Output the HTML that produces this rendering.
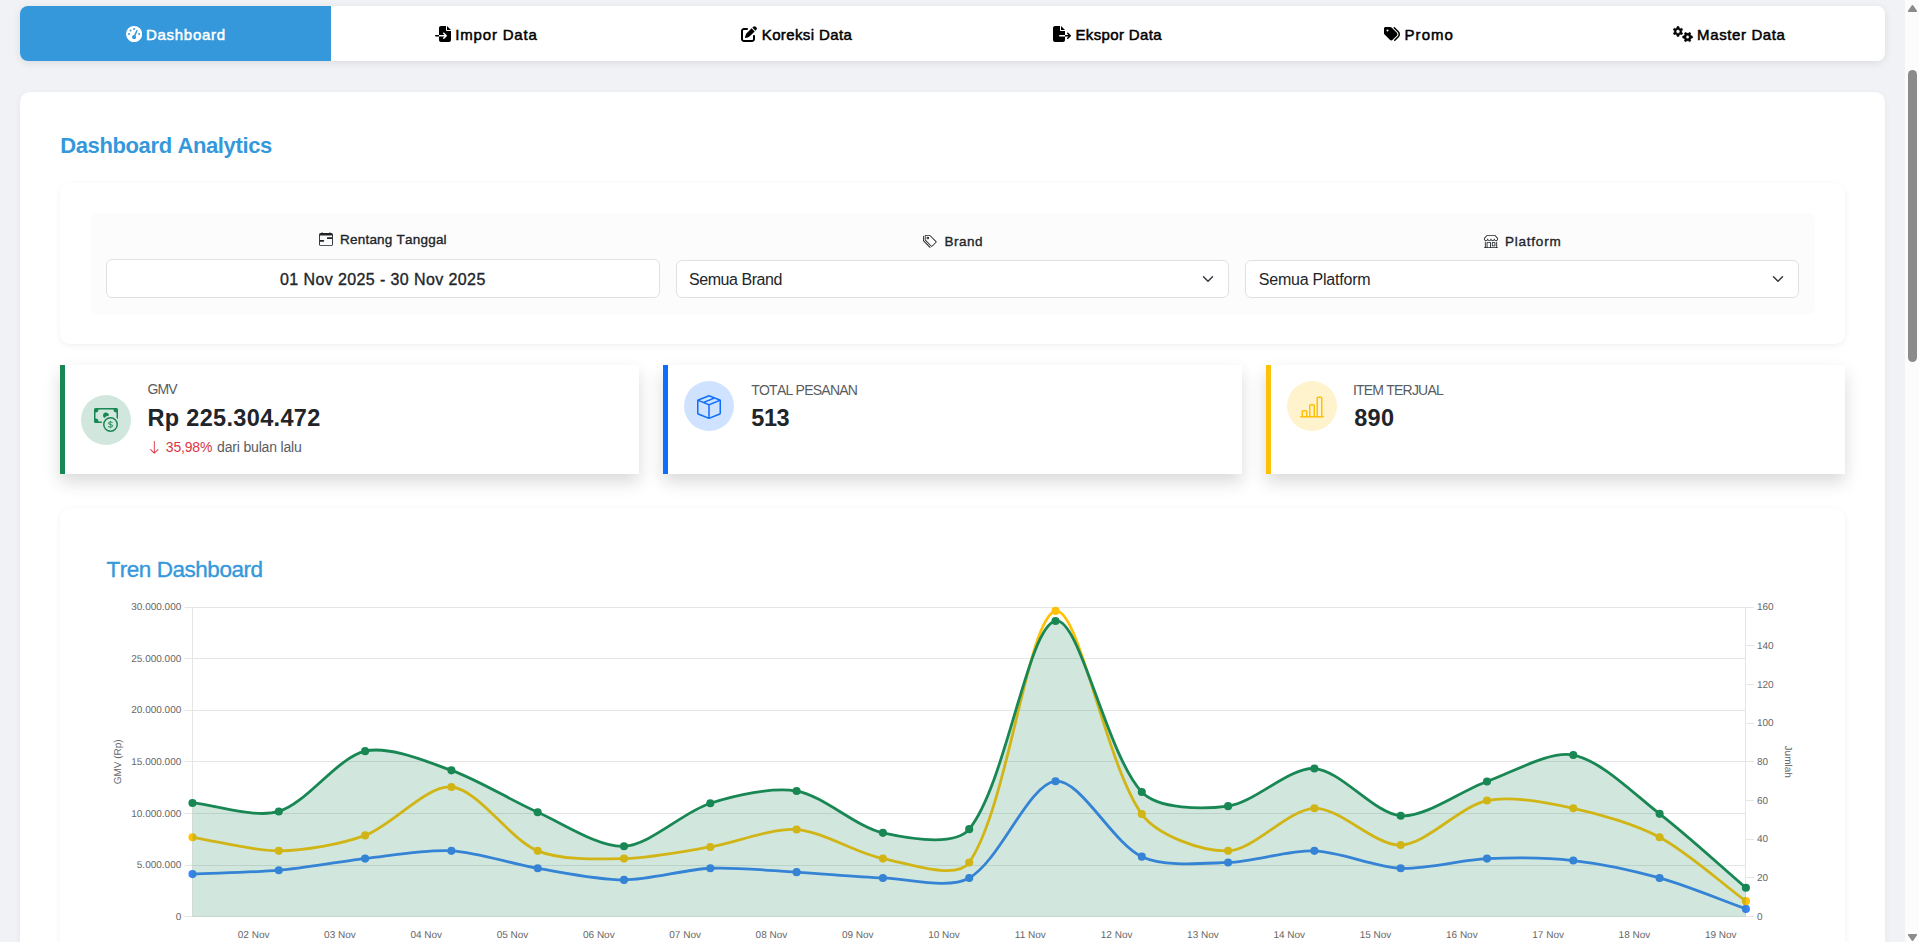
<!DOCTYPE html>
<html lang="id">
<head>
<meta charset="utf-8">
<title>Dashboard Analytics</title>
<style>
html,body{margin:0;padding:0}
body{width:1919px;height:942px;overflow:hidden;position:relative;background:#f0f2f5;font-family:'Liberation Sans', Arial, sans-serif;color:#212529}
nav,main,section,header,aside{display:block;margin:0;padding:0}
.abs,svg{position:absolute}
.t{position:absolute;margin:0;white-space:nowrap;line-height:30px;height:30px;font-kerning:none;text-decoration:none}
.card{position:absolute;background:#fff}
.field{position:absolute;border:1px solid #dee2e6;border-radius:6px;background:#fff;box-sizing:border-box}
.stat{position:absolute;top:365px;width:579px;height:108.7px;background:#fff;box-shadow:0 8px 16px rgba(0,0,0,.15)}
.bar{position:absolute;top:365px;width:5px;height:108.7px}
.circle{position:absolute;width:50px;height:50px;border-radius:50%}
</style>
</head>
<body>
<nav class="tabs">
<div class="card" style="left:20px;top:5.6px;width:1865px;height:55.1px;border-radius:8px;box-shadow:0 2px 8px rgba(0,0,0,.09)"></div>
<div class="abs active" style="left:20px;top:5.6px;width:310.9px;height:55.1px;border-radius:8px 0 0 8px;background:#3498db"></div>
<svg style="left:125.6px;top:25.9px" width="16.2" height="16.2" viewBox="0 0 512 512"><path fill="#fff" d="M0 256a256 256 0 1 1 512 0A256 256 0 1 1 0 256zM288 96a32 32 0 1 0 -64 0 32 32 0 1 0 64 0zM256 416c35.3 0 64-28.7 64-64c0-17.4-6.900-33.100-18.100-44.600L366 161.700c5.300-12.100-.200-26.300-12.300-31.600s-26.300 .200-31.600 12.300L257.900 288c-.600 0-1.300 0-1.900 0c-35.300 0-64 28.700-64 64s28.700 64 64 64zM176 144a32 32 0 1 0 -64 0 32 32 0 1 0 64 0zM96 288a32 32 0 1 0 0-64 32 32 0 1 0 0 64zm352-32a32 32 0 1 0 -64 0 32 32 0 1 0 64 0z"/></svg>
<a class="t" id="nav1" style="left:145.90px;top:19.50px;font-size:15px;font-weight:400;color:#fff;letter-spacing:0.726px;-webkit-text-stroke:0.5px #fff;">Dashboard</a>
<svg style="left:435px;top:25.9px" width="16" height="16" viewBox="0 0 512 512"><path fill="#000" d="M128 64c0-35.300 28.700-64 64-64H352V128c0 17.700 14.300 32 32 32H512V448c0 35.300-28.700 64-64 64H192c-35.300 0-64-28.700-64-64V336H302.100l-39 39c-9.400 9.400-9.400 24.600 0 33.900s24.600 9.400 33.900 0l80-80c9.400-9.400 9.400-24.600 0-33.900l-80-80c-9.400-9.400-24.600-9.400-33.900 0s-9.400 24.600 0 33.900l39 39H128V64zm0 224v48H24c-13.300 0-24-10.700-24-24s10.700-24 24-24H128zM512 128H384V0L512 128z"/></svg>
<a class="t" id="nav2" style="left:455.25px;top:19.50px;font-size:15px;font-weight:400;color:#000;letter-spacing:0.822px;-webkit-text-stroke:0.5px #000;">Impor Data</a>
<svg style="left:741px;top:25.9px" width="16" height="16" viewBox="0 0 512 512"><path fill="#000" d="M471.600 21.700c-21.900-21.900-57.300-21.900-79.200 0L362.300 51.700l97.900 97.900 30.100-30.100c21.900-21.900 21.900-57.300 0-79.200L471.600 21.700zm-299.200 220c-6.100 6.100-10.800 13.600-13.500 21.900l-29.600 88.800c-2.900 8.600-.600 18.100 5.800 24.600s15.900 8.700 24.600 5.800l88.800-29.600c8.200-2.700 15.700-7.400 21.900-13.500L437.700 172.300 339.700 74.300 172.400 241.700zM96 64C43 64 0 107 0 160V416c0 53 43 96 96 96H352c53 0 96-43 96-96V320c0-17.700-14.300-32-32-32s-32 14.300-32 32v96c0 17.700-14.300 32-32 32H96c-17.700 0-32-14.300-32-32V160c0-17.700 14.300-32 32-32h96c17.700 0 32-14.300 32-32s-14.300-32-32-32H96z"/></svg>
<a class="t" id="nav3" style="left:761.75px;top:19.50px;font-size:15px;font-weight:400;color:#000;letter-spacing:0.384px;-webkit-text-stroke:0.5px #000;">Koreksi Data</a>
<svg style="left:1053.2px;top:25.9px" width="18" height="16" viewBox="0 0 576 512"><path fill="#000" d="M0 64C0 28.700 28.700 0 64 0H224V128c0 17.700 14.300 32 32 32H384V288H216c-13.300 0-24 10.700-24 24s10.700 24 24 24H384V448c0 35.300-28.700 64-64 64H64c-35.300 0-64-28.700-64-64V64zM384 336V288H494.100l-39-39c-9.400-9.400-9.400-24.600 0-33.900s24.600-9.400 33.900 0l80 80c9.400 9.400 9.400 24.600 0 33.900l-80 80c-9.400 9.400-24.600 9.400-33.900 0s-9.400-24.600 0-33.900l39-39H384zm0-208H256V0L384 128z"/></svg>
<a class="t" id="nav4" style="left:1075.50px;top:19.50px;font-size:15px;font-weight:400;color:#000;letter-spacing:0.356px;-webkit-text-stroke:0.5px #000;">Ekspor Data</a>
<svg style="left:1384px;top:25.9px" width="16" height="16" viewBox="0 0 512 512"><path fill="#000" d="M345 39.100L472.800 168.400c52.400 53 52.400 138.200 0 191.200L360.800 472.900c-9.300 9.400-24.500 9.500-33.900 .200s-9.500-24.500-.200-33.900L438.600 325.900c33.900-34.300 33.900-89.400 0-123.700L310.900 72.900c-9.300-9.400-9.200-24.600 .200-33.900s24.600-9.200 33.900 .200zM0 229.500V80C0 53.500 21.500 32 48 32H197.500c17 0 33.300 6.700 45.300 18.700l168 168c25 25 25 65.500 0 90.500L277.300 442.700c-25 25-65.500 25-90.500 0l-168-168C6.700 262.700 0 246.500 0 229.500zM144 144a32 32 0 1 0 -64 0 32 32 0 1 0 64 0z"/></svg>
<a class="t" id="nav5" style="left:1404.60px;top:19.50px;font-size:15px;font-weight:400;color:#000;letter-spacing:1.016px;-webkit-text-stroke:0.5px #000;">Promo</a>
<svg style="left:1672.7px;top:25.6px" width="21" height="17.5" viewBox="0 0 21 17.5"><path fill="#000" fill-rule="evenodd" stroke="#000" stroke-width="0.5" stroke-linejoin="round" d="M6.20 9.00L5.90 10.42L4.10 10.42L3.80 9.00L2.52 8.26L1.14 8.71L0.25 7.16L1.32 6.19L1.32 4.71L0.25 3.74L1.14 2.19L2.52 2.64L3.80 1.90L4.10 0.48L5.90 0.48L6.20 1.90L7.48 2.64L8.86 2.19L9.75 3.74L8.68 4.71L8.68 6.19L9.75 7.16L8.86 8.71L7.48 8.26ZM3.05 5.45a1.95 1.95 0 1 0 3.90 0a1.95 1.95 0 1 0 -3.90 0ZM18.15 9.85L19.57 10.15L19.57 11.95L18.15 12.25L17.41 13.53L17.86 14.91L16.31 15.80L15.34 14.73L13.86 14.73L12.89 15.80L11.34 14.91L11.79 13.53L11.05 12.25L9.63 11.95L9.63 10.15L11.05 9.85L11.79 8.57L11.34 7.19L12.89 6.30L13.86 7.37L15.34 7.37L16.31 6.30L17.86 7.19L17.41 8.57ZM12.90 11.05a1.70 1.70 0 1 0 3.40 0a1.70 1.70 0 1 0 -3.40 0Z"/></svg>
<a class="t" id="nav6" style="left:1697.10px;top:19.50px;font-size:15px;font-weight:400;color:#000;letter-spacing:0.615px;-webkit-text-stroke:0.5px #000;">Master Data</a>
</nav>
<main>
<div class="card" style="left:20px;top:92px;width:1865px;height:900px;border-radius:10px;box-shadow:0 2px 7px rgba(0,0,0,.05)"></div>
<h1 class="t" id="title" style="left:60.20px;top:131.10px;font-size:22px;font-weight:700;color:#3498db;letter-spacing:-0.378px;">Dashboard Analytics</h1>
<section class="filters">
<div class="card" style="left:60px;top:183px;width:1785px;height:161px;border-radius:10px;box-shadow:0 2px 6px rgba(0,0,0,.06)"></div>
<div class="abs" style="left:90px;top:213px;width:1725px;height:100.5px;border-radius:6px;background:#fcfcfc"></div>
<svg style="left:318.8px;top:232.1px" width="14" height="14" viewBox="0 0 16 16" fill="#212529"><path fill-rule="evenodd" d="M9 7a1 1 0 0 1 1-1h5v2h-5a1 1 0 0 1-1-1M1 9h4a1 1 0 0 1 0 2H1z"/><path fill-rule="evenodd" d="M3.5 0a.5.5 0 0 1 .5.5V1h8V.5a.5.5 0 0 1 1 0V1h1a2 2 0 0 1 2 2v11a2 2 0 0 1-2 2H2a2 2 0 0 1-2-2V3a2 2 0 0 1 2-2h1V.5a.5.5 0 0 1 .5-.5M1 4v10a1 1 0 0 0 1 1h12a1 1 0 0 0 1-1V4z"/></svg>
<label class="t" id="lab1" style="left:340.00px;top:225.30px;font-size:13.5px;font-weight:400;color:#212529;letter-spacing:0.216px;-webkit-text-stroke:0.35px #212529;">Rentang Tanggal</label>
<div class="field" style="left:106px;top:259px;width:553.7px;height:38.5px"></div>
<div class="t" id="inp1" style="left:280.00px;top:264.90px;font-size:16px;font-weight:400;color:#212529;letter-spacing:0.400px;-webkit-text-stroke:0.35px #212529;">01 Nov 2025 - 30 Nov 2025</div>
<svg style="left:922.6px;top:234.2px" width="14" height="14" viewBox="0 0 16 16" fill="#212529"><path fill-rule="evenodd" d="M3 2v4.586l7 7L14.586 9l-7-7zM2 2a1 1 0 0 1 1-1h4.586a1 1 0 0 1 .707.293l7 7a1 1 0 0 1 0 1.414l-4.586 4.586a1 1 0 0 1-1.414 0l-7-7A1 1 0 0 1 2 6.586z"/><path fill-rule="evenodd" d="M5.5 5a.5.5 0 1 1 0-1 .5.5 0 0 1 0 1m0 1a1.5 1.5 0 1 0 0-3 1.5 1.5 0 0 0 0 3M1 7.086a1 1 0 0 0 .293.707L8.750 15.250l-.043.043a1 1 0 0 1-1.414 0l-7-7A1 1 0 0 1 0 7.586V3a1 1 0 0 1 1-1z"/></svg>
<label class="t" id="lab2" style="left:944.60px;top:226.50px;font-size:13.5px;font-weight:400;color:#212529;letter-spacing:0.446px;-webkit-text-stroke:0.35px #212529;">Brand</label>
<div class="field" style="left:675.7px;top:260px;width:553.2px;height:38px"></div>
<div class="t" id="sel2" style="left:689.00px;top:264.70px;font-size:16px;font-weight:400;color:#212529;letter-spacing:-0.444px;">Semua Brand</div>
<svg style="left:1483.6px;top:234.4px" width="14" height="14" viewBox="0 0 16 16" fill="#212529"><path fill-rule="evenodd" d="M2.970 1.350A1 1 0 0 1 3.730 1h8.540a1 1 0 0 1 .760.350l2.609 3.044A1.500 1.500 0 0 1 16 5.370v.255a2.375 2.375 0 0 1-4.250 1.458A2.370 2.370 0 0 1 9.875 8 2.370 2.370 0 0 1 8 7.083 2.370 2.370 0 0 1 6.125 8a2.370 2.370 0 0 1-1.875-.917A2.375 2.375 0 0 1 0 5.625V5.370a1.500 1.500 0 0 1 .361-.976zm1.780 4.275a1.375 1.375 0 0 0 2.750 0 .500.500 0 0 1 1 0 1.375 1.375 0 0 0 2.750 0 .500.500 0 0 1 1 0 1.375 1.375 0 1 0 2.750 0V5.370a.500.500 0 0 0-.120-.325L12.270 2H3.730L1.120 5.045A.500.500 0 0 0 1 5.370v.255a1.375 1.375 0 0 0 2.750 0 .500.500 0 0 1 1 0M1.500 8.500A.500.500 0 0 1 2 9v6h1v-5a1 1 0 0 1 1-1h3a1 1 0 0 1 1 1v5h6V9a.500.500 0 0 1 1 0v6h.500a.500.500 0 0 1 0 1H.500a.500.500 0 0 1 0-1H1V9a.500.500 0 0 1 .500-.500M4 15h3v-5H4zm5-5a1 1 0 0 1 1-1h2a1 1 0 0 1 1 1v3a1 1 0 0 1-1 1h-2a1 1 0 0 1-1-1zm3 0h-2v3h2z"/></svg>
<label class="t" id="lab3" style="left:1505.00px;top:226.50px;font-size:13.5px;font-weight:400;color:#212529;letter-spacing:0.769px;-webkit-text-stroke:0.35px #212529;">Platform</label>
<div class="field" style="left:1245px;top:260px;width:553.7px;height:38px"></div>
<div class="t" id="sel3" style="left:1258.75px;top:264.70px;font-size:16px;font-weight:400;color:#212529;letter-spacing:-0.222px;">Semua Platform</div>
<svg style="left:1200.2px;top:273px" width="16" height="12" viewBox="0 0 16 16"><path fill="none" stroke="#343a40" stroke-linecap="round" stroke-linejoin="round" stroke-width="2" d="m2 5 6 6 6-6"/></svg>
<svg style="left:1770.2px;top:273px" width="16" height="12" viewBox="0 0 16 16"><path fill="none" stroke="#343a40" stroke-linecap="round" stroke-linejoin="round" stroke-width="2" d="m2 5 6 6 6-6"/></svg>
</section>
<section class="stats">
<div class="stat" style="left:60px"></div>
<div class="stat" style="left:663px"></div>
<div class="stat" style="left:1266px"></div>
<div class="bar" style="left:60px;background:#198754"></div>
<div class="bar" style="left:663px;background:#0d6efd"></div>
<div class="bar" style="left:1266px;background:#ffc107"></div>
<div class="circle" style="left:81px;top:395px;background:#d1e7dd"></div>
<svg style="left:94px;top:408px" width="24" height="24" viewBox="0 0 16 16" fill="#198754"><path fill-rule="evenodd" d="M11 15a4 4 0 1 0 0-8 4 4 0 0 0 0 8m5-4a5 5 0 1 1-10 0 5 5 0 0 1 10 0"/><path fill-rule="evenodd" d="M9.438 11.944c.047.596.518 1.060 1.363 1.116v.440h.375v-.443c.875-.061 1.386-.529 1.386-1.207 0-.618-.390-.936-1.090-1.100l-.296-.070v-1.200c.376.043.614.248.671.532h.658c-.047-.575-.540-1.024-1.329-1.073V8.500h-.375v.450c-.747.073-1.255.522-1.255 1.158 0 .562.378.920 1.007 1.066l.248.061v1.272c-.384-.058-.639-.270-.696-.563h-.668zm1.360-1.354c-.369-.085-.569-.260-.569-.522 0-.294.216-.514.572-.578v1.100zm.432.746c.449.104.655.272.655.569 0 .339-.257.571-.709.614v-1.195z"/><path fill-rule="evenodd" d="M1 0a1 1 0 0 0-1 1v8a1 1 0 0 0 1 1h4.083q.088-.517.258-1H3a2 2 0 0 0-2-2V3a2 2 0 0 0 2-2h10a2 2 0 0 0 2 2v3.528c.380.340.717.728 1 1.154V1a1 1 0 0 0-1-1z"/><path fill-rule="evenodd" d="M9.998 5.083 10 5a2 2 0 1 0-3.132 1.650 6 6 0 0 1 3.130-1.567"/></svg>
<div class="t" id="s1l" style="left:147.50px;top:374.00px;font-size:14px;font-weight:400;color:#595c5f;letter-spacing:-0.876px;">GMV</div>
<div class="t" id="s1v" style="left:147.50px;top:403.00px;font-size:23.5px;font-weight:700;color:#212529;letter-spacing:0.325px;">Rp 225.304.472</div>
<svg style="left:146.6px;top:440px" width="14.6" height="14.6" viewBox="0 0 16 16" fill="#dc3545"><path fill-rule="evenodd" d="M8 1a.5.5 0 0 1 .5.5v11.793l3.146-3.147a.5.5 0 0 1 .708.708l-4 4a.5.5 0 0 1-.708 0l-4-4a.5.5 0 0 1 .708-.708L7.500 13.293V1.500A.5.5 0 0 1 8 1"/></svg>
<span class="t" id="s1p" style="left:165.80px;top:432.00px;font-size:14px;font-weight:400;color:#dc3545;letter-spacing:-0.187px;">35,98%</span>
<span class="t" id="s1d" style="left:217.10px;top:432.00px;font-size:14px;font-weight:400;color:#595c5f;letter-spacing:-0.178px;">dari bulan lalu</span>
<div class="circle" style="left:684px;top:381px;background:#cfe2ff"></div>
<svg style="left:697px;top:394.7px" width="24" height="24" viewBox="0 0 16 16" fill="#0d6efd"><path fill-rule="evenodd" d="M8.186 1.113a.5.5 0 0 0-.372 0L1.846 3.500l2.404.961L10.404 2zm3.564 1.426L5.596 5 8 5.961 14.154 3.500zm3.250 1.700-6.500 2.600v7.922l6.500-2.600V4.240zM7.500 14.762V6.838L1 4.239v7.923zM7.443.184a1.500 1.500 0 0 1 1.114 0l7.129 2.852A.500.500 0 0 1 16 3.500v8.662a1 1 0 0 1-.629.928l-7.185 2.874a.500.500 0 0 1-.372 0L.630 13.090a1 1 0 0 1-.630-.928V3.500a.500.500 0 0 1 .314-.464z"/></svg>
<div class="t" id="s2l" style="left:751.20px;top:375.00px;font-size:14px;font-weight:400;color:#595c5f;letter-spacing:-0.767px;">TOTAL PESANAN</div>
<div class="t" id="s2v" style="left:751.20px;top:403.00px;font-size:23.5px;font-weight:700;color:#212529;letter-spacing:-0.370px;">513</div>
<div class="circle" style="left:1287px;top:381px;background:#fff3cd"></div>
<svg style="left:1300px;top:394.7px" width="24" height="24" viewBox="0 0 16 16" fill="#ffc107"><path fill-rule="evenodd" d="M11 2a1 1 0 0 1 1-1h2a1 1 0 0 1 1 1v12h.5a.5.5 0 0 1 0 1H.5a.5.5 0 0 1 0-1H1v-3a1 1 0 0 1 1-1h2a1 1 0 0 1 1 1v3h1V7a1 1 0 0 1 1-1h2a1 1 0 0 1 1 1v7h1zm1 12h2V2h-2zm-3 0V7H7v7zm-5 0v-3H2v3z"/></svg>
<div class="t" id="s3l" style="left:1352.90px;top:375.00px;font-size:14px;font-weight:400;color:#595c5f;letter-spacing:-0.789px;">ITEM TERJUAL</div>
<div class="t" id="s3v" style="left:1354.20px;top:403.00px;font-size:23.5px;font-weight:700;color:#212529;letter-spacing:0.330px;">890</div>
</section>
<section class="trend">
<div class="card" style="left:60px;top:508px;width:1785px;height:500px;border-radius:10px;box-shadow:0 2px 6px rgba(0,0,0,.06)"></div>
<h2 class="t" id="ctitle" style="left:106.50px;top:554.70px;font-size:22.5px;font-weight:400;color:#3498db;letter-spacing:-0.467px;-webkit-text-stroke:0.35px #3498db;">Tren Dashboard</h2>
<svg class="chart" width="1919" height="942" viewBox="0 0 1919 942" style="left:0;top:0;font-family:'Liberation Sans',Arial,sans-serif;font-size:10px;text-rendering:geometricPrecision">
<line x1="184.5" y1="607.5" x2="1746" y2="607.5" stroke="#e5e5e5" stroke-width="1"/>
<line x1="184.5" y1="658.5" x2="1746" y2="658.5" stroke="#e5e5e5" stroke-width="1"/>
<line x1="184.5" y1="710.5" x2="1746" y2="710.5" stroke="#e5e5e5" stroke-width="1"/>
<line x1="184.5" y1="761.5" x2="1746" y2="761.5" stroke="#e5e5e5" stroke-width="1"/>
<line x1="184.5" y1="813.5" x2="1746" y2="813.5" stroke="#e5e5e5" stroke-width="1"/>
<line x1="184.5" y1="865.5" x2="1746" y2="865.5" stroke="#e5e5e5" stroke-width="1"/>
<line x1="184.5" y1="916.5" x2="1746" y2="916.5" stroke="#e5e5e5" stroke-width="1"/>
<line x1="192.5" y1="607" x2="192.5" y2="917" stroke="#e5e5e5" stroke-width="1"/>
<line x1="1745.5" y1="607" x2="1745.5" y2="917" stroke="#e5e5e5" stroke-width="1"/>
<line x1="1746" y1="607.5" x2="1754" y2="607.5" stroke="#e5e5e5" stroke-width="1"/>
<line x1="1746" y1="645.5" x2="1754" y2="645.5" stroke="#e5e5e5" stroke-width="1"/>
<line x1="1746" y1="684.5" x2="1754" y2="684.5" stroke="#e5e5e5" stroke-width="1"/>
<line x1="1746" y1="723.5" x2="1754" y2="723.5" stroke="#e5e5e5" stroke-width="1"/>
<line x1="1746" y1="761.5" x2="1754" y2="761.5" stroke="#e5e5e5" stroke-width="1"/>
<line x1="1746" y1="800.5" x2="1754" y2="800.5" stroke="#e5e5e5" stroke-width="1"/>
<line x1="1746" y1="839.5" x2="1754" y2="839.5" stroke="#e5e5e5" stroke-width="1"/>
<line x1="1746" y1="877.5" x2="1754" y2="877.5" stroke="#e5e5e5" stroke-width="1"/>
<line x1="1746" y1="916.5" x2="1754" y2="916.5" stroke="#e5e5e5" stroke-width="1"/>
<path d="M192.50 874.08C218.39 872.92 253.01 872.52 278.80 870.21C304.79 867.88 339.15 861.51 365.10 858.60C390.93 855.70 425.72 849.42 451.40 850.86C477.50 852.32 511.67 863.90 537.70 868.27C563.45 872.60 598.11 879.88 624.00 879.88C649.89 879.88 684.31 869.44 710.30 868.27C736.09 867.12 770.73 870.69 796.60 872.14C822.51 873.60 856.98 877.08 882.90 877.95C908.76 878.82 948.51 889.55 969.20 877.95C1000.29 860.52 1028.02 784.59 1055.50 781.20C1079.80 778.20 1112.29 842.77 1141.80 856.66C1164.07 867.15 1202.30 863.34 1228.10 862.47C1254.08 861.60 1288.65 849.99 1314.40 850.86C1340.43 851.74 1374.63 867.11 1400.70 868.27C1426.41 869.43 1461.03 859.76 1487.00 858.60C1512.81 857.44 1547.67 857.66 1573.30 860.53C1599.45 863.47 1634.24 870.84 1659.60 877.95C1686.02 885.35 1720.01 899.62 1745.90 908.91" fill="none" stroke="#3b82f6" stroke-width="2.8" stroke-linejoin="round" stroke-linecap="butt"/>
<circle cx="192.50" cy="874.08" r="4.05" fill="#3b82f6"/>
<circle cx="278.80" cy="870.21" r="4.05" fill="#3b82f6"/>
<circle cx="365.10" cy="858.60" r="4.05" fill="#3b82f6"/>
<circle cx="451.40" cy="850.86" r="4.05" fill="#3b82f6"/>
<circle cx="537.70" cy="868.27" r="4.05" fill="#3b82f6"/>
<circle cx="624.00" cy="879.88" r="4.05" fill="#3b82f6"/>
<circle cx="710.30" cy="868.27" r="4.05" fill="#3b82f6"/>
<circle cx="796.60" cy="872.14" r="4.05" fill="#3b82f6"/>
<circle cx="882.90" cy="877.95" r="4.05" fill="#3b82f6"/>
<circle cx="969.20" cy="877.95" r="4.05" fill="#3b82f6"/>
<circle cx="1055.50" cy="781.20" r="4.05" fill="#3b82f6"/>
<circle cx="1141.80" cy="856.66" r="4.05" fill="#3b82f6"/>
<circle cx="1228.10" cy="862.47" r="4.05" fill="#3b82f6"/>
<circle cx="1314.40" cy="850.86" r="4.05" fill="#3b82f6"/>
<circle cx="1400.70" cy="868.27" r="4.05" fill="#3b82f6"/>
<circle cx="1487.00" cy="858.60" r="4.05" fill="#3b82f6"/>
<circle cx="1573.30" cy="860.53" r="4.05" fill="#3b82f6"/>
<circle cx="1659.60" cy="877.95" r="4.05" fill="#3b82f6"/>
<circle cx="1745.90" cy="908.91" r="4.05" fill="#3b82f6"/>
<path d="M192.50 837.31C218.39 841.38 252.96 851.15 278.80 850.86C304.74 850.57 340.77 844.38 365.10 835.38C392.55 825.22 426.57 784.78 451.40 787.00C478.35 789.42 509.05 838.97 537.70 850.86C560.83 860.45 598.17 859.18 624.00 858.60C649.95 858.02 684.55 851.32 710.30 846.99C736.33 842.61 771.15 827.86 796.60 829.57C822.93 831.35 856.33 853.54 882.90 858.60C908.11 863.40 956.50 880.69 969.20 862.47C1008.28 806.38 1027.21 618.85 1055.50 610.92C1078.99 607.05 1105.46 763.58 1141.80 814.10C1157.24 835.56 1202.54 851.72 1228.10 850.86C1254.32 849.98 1288.18 809.17 1314.40 808.29C1339.96 807.43 1375.26 846.20 1400.70 845.05C1427.04 843.87 1459.64 806.38 1487.00 800.55C1511.42 795.35 1548.05 802.91 1573.30 808.29C1599.83 813.94 1635.84 824.53 1659.60 837.31C1687.62 852.39 1720.01 882.01 1745.90 901.17" fill="none" stroke="#ffc107" stroke-width="2.8" stroke-linejoin="round" stroke-linecap="butt"/>
<circle cx="192.50" cy="837.31" r="4.05" fill="#ffc107"/>
<circle cx="278.80" cy="850.86" r="4.05" fill="#ffc107"/>
<circle cx="365.10" cy="835.38" r="4.05" fill="#ffc107"/>
<circle cx="451.40" cy="787.00" r="4.05" fill="#ffc107"/>
<circle cx="537.70" cy="850.86" r="4.05" fill="#ffc107"/>
<circle cx="624.00" cy="858.60" r="4.05" fill="#ffc107"/>
<circle cx="710.30" cy="846.99" r="4.05" fill="#ffc107"/>
<circle cx="796.60" cy="829.57" r="4.05" fill="#ffc107"/>
<circle cx="882.90" cy="858.60" r="4.05" fill="#ffc107"/>
<circle cx="969.20" cy="862.47" r="4.05" fill="#ffc107"/>
<circle cx="1055.50" cy="610.92" r="4.05" fill="#ffc107"/>
<circle cx="1141.80" cy="814.10" r="4.05" fill="#ffc107"/>
<circle cx="1228.10" cy="850.86" r="4.05" fill="#ffc107"/>
<circle cx="1314.40" cy="808.29" r="4.05" fill="#ffc107"/>
<circle cx="1400.70" cy="845.05" r="4.05" fill="#ffc107"/>
<circle cx="1487.00" cy="800.55" r="4.05" fill="#ffc107"/>
<circle cx="1573.30" cy="808.29" r="4.05" fill="#ffc107"/>
<circle cx="1659.60" cy="837.31" r="4.05" fill="#ffc107"/>
<circle cx="1745.90" cy="901.17" r="4.05" fill="#ffc107"/>
<path d="M192.50 802.95C218.39 805.50 255.41 818.47 278.80 811.45C307.19 802.93 336.96 757.85 365.10 751.15C388.74 745.52 426.57 761.56 451.40 770.35C478.35 779.89 511.37 800.67 537.70 812.25C563.15 823.44 598.61 847.57 624.00 846.25C650.39 844.87 683.10 811.95 710.30 803.25C734.88 795.39 771.95 786.82 796.60 791.05C823.73 795.70 855.66 826.84 882.90 832.85C907.44 838.27 954.85 846.76 969.20 829.15C1006.63 783.19 1027.51 626.97 1055.50 620.95C1079.29 615.84 1106.24 753.90 1141.80 792.05C1158.02 809.46 1203.16 809.55 1228.10 806.15C1254.94 802.50 1289.08 767.14 1314.40 768.55C1340.86 770.02 1374.07 813.76 1400.70 815.75C1425.85 817.63 1460.74 790.69 1487.00 781.45C1512.52 772.48 1549.30 750.54 1573.30 755.05C1601.08 760.26 1634.80 794.78 1659.60 813.85C1686.58 834.59 1720.01 865.58 1745.90 887.75L1745.90 916.65L192.50 916.65Z" fill="rgba(25,135,84,0.2)" stroke="none"/>
<path d="M192.50 802.95C218.39 805.50 255.41 818.47 278.80 811.45C307.19 802.93 336.96 757.85 365.10 751.15C388.74 745.52 426.57 761.56 451.40 770.35C478.35 779.89 511.37 800.67 537.70 812.25C563.15 823.44 598.61 847.57 624.00 846.25C650.39 844.87 683.10 811.95 710.30 803.25C734.88 795.39 771.95 786.82 796.60 791.05C823.73 795.70 855.66 826.84 882.90 832.85C907.44 838.27 954.85 846.76 969.20 829.15C1006.63 783.19 1027.51 626.97 1055.50 620.95C1079.29 615.84 1106.24 753.90 1141.80 792.05C1158.02 809.46 1203.16 809.55 1228.10 806.15C1254.94 802.50 1289.08 767.14 1314.40 768.55C1340.86 770.02 1374.07 813.76 1400.70 815.75C1425.85 817.63 1460.74 790.69 1487.00 781.45C1512.52 772.48 1549.30 750.54 1573.30 755.05C1601.08 760.26 1634.80 794.78 1659.60 813.85C1686.58 834.59 1720.01 865.58 1745.90 887.75" fill="none" stroke="#198754" stroke-width="2.8" stroke-linejoin="round"/>
<circle cx="192.50" cy="802.95" r="4.05" fill="#198754"/>
<circle cx="278.80" cy="811.45" r="4.05" fill="#198754"/>
<circle cx="365.10" cy="751.15" r="4.05" fill="#198754"/>
<circle cx="451.40" cy="770.35" r="4.05" fill="#198754"/>
<circle cx="537.70" cy="812.25" r="4.05" fill="#198754"/>
<circle cx="624.00" cy="846.25" r="4.05" fill="#198754"/>
<circle cx="710.30" cy="803.25" r="4.05" fill="#198754"/>
<circle cx="796.60" cy="791.05" r="4.05" fill="#198754"/>
<circle cx="882.90" cy="832.85" r="4.05" fill="#198754"/>
<circle cx="969.20" cy="829.15" r="4.05" fill="#198754"/>
<circle cx="1055.50" cy="620.95" r="4.05" fill="#198754"/>
<circle cx="1141.80" cy="792.05" r="4.05" fill="#198754"/>
<circle cx="1228.10" cy="806.15" r="4.05" fill="#198754"/>
<circle cx="1314.40" cy="768.55" r="4.05" fill="#198754"/>
<circle cx="1400.70" cy="815.75" r="4.05" fill="#198754"/>
<circle cx="1487.00" cy="781.45" r="4.05" fill="#198754"/>
<circle cx="1573.30" cy="755.05" r="4.05" fill="#198754"/>
<circle cx="1659.60" cy="813.85" r="4.05" fill="#198754"/>
<circle cx="1745.90" cy="887.75" r="4.05" fill="#198754"/>
<text x="181.3" y="610.25" text-anchor="end" fill="#666">30.000.000</text>
<text x="181.3" y="661.85" text-anchor="end" fill="#666">25.000.000</text>
<text x="181.3" y="713.45" text-anchor="end" fill="#666">20.000.000</text>
<text x="181.3" y="765.05" text-anchor="end" fill="#666">15.000.000</text>
<text x="181.3" y="816.65" text-anchor="end" fill="#666">10.000.000</text>
<text x="181.3" y="868.25" text-anchor="end" fill="#666">5.000.000</text>
<text x="181.3" y="919.85" text-anchor="end" fill="#666">0</text>
<text x="1757" y="610.25" fill="#666">160</text>
<text x="1757" y="648.95" fill="#666">140</text>
<text x="1757" y="687.65" fill="#666">120</text>
<text x="1757" y="726.35" fill="#666">100</text>
<text x="1757" y="765.05" fill="#666">80</text>
<text x="1757" y="803.75" fill="#666">60</text>
<text x="1757" y="842.45" fill="#666">40</text>
<text x="1757" y="881.15" fill="#666">20</text>
<text x="1757" y="919.85" fill="#666">0</text>
<text x="253.63" y="938.20" text-anchor="middle" fill="#666">02 Nov</text>
<text x="339.93" y="938.20" text-anchor="middle" fill="#666">03 Nov</text>
<text x="426.23" y="938.20" text-anchor="middle" fill="#666">04 Nov</text>
<text x="512.53" y="938.20" text-anchor="middle" fill="#666">05 Nov</text>
<text x="598.83" y="938.20" text-anchor="middle" fill="#666">06 Nov</text>
<text x="685.13" y="938.20" text-anchor="middle" fill="#666">07 Nov</text>
<text x="771.43" y="938.20" text-anchor="middle" fill="#666">08 Nov</text>
<text x="857.73" y="938.20" text-anchor="middle" fill="#666">09 Nov</text>
<text x="944.03" y="938.20" text-anchor="middle" fill="#666">10 Nov</text>
<text x="1030.33" y="938.20" text-anchor="middle" fill="#666">11 Nov</text>
<text x="1116.63" y="938.20" text-anchor="middle" fill="#666">12 Nov</text>
<text x="1202.93" y="938.20" text-anchor="middle" fill="#666">13 Nov</text>
<text x="1289.23" y="938.20" text-anchor="middle" fill="#666">14 Nov</text>
<text x="1375.53" y="938.20" text-anchor="middle" fill="#666">15 Nov</text>
<text x="1461.83" y="938.20" text-anchor="middle" fill="#666">16 Nov</text>
<text x="1548.13" y="938.20" text-anchor="middle" fill="#666">17 Nov</text>
<text x="1634.43" y="938.20" text-anchor="middle" fill="#666">18 Nov</text>
<text x="1720.73" y="938.20" text-anchor="middle" fill="#666">19 Nov</text>
<text transform="translate(120.7,761.8) rotate(-90)" text-anchor="middle" fill="#666">GMV (Rp)</text>
<text transform="translate(1785.2,761.7) rotate(90)" text-anchor="middle" fill="#666">Jumlah</text>
</svg>
</section>
</main>
<aside class="scrollbar">
<div class="abs" style="left:1905px;top:0;width:14px;height:942px;background:#fcfcfc"></div>
<div class="abs" style="left:1908px;top:70px;width:9px;height:292px;border-radius:4.5px;background:#8b8b8b"></div>
<svg style="left:1904px;top:0" width="15" height="942" viewBox="0 0 15 942"><path fill="#8b8b8b" stroke="#8b8b8b" stroke-width="1.6" stroke-linejoin="round" d="M8.5 5.8L12.3 11.2H4.7ZM8.500 940.200L12.300 934.800H4.700Z"/></svg>
</aside>
</body>
</html>
